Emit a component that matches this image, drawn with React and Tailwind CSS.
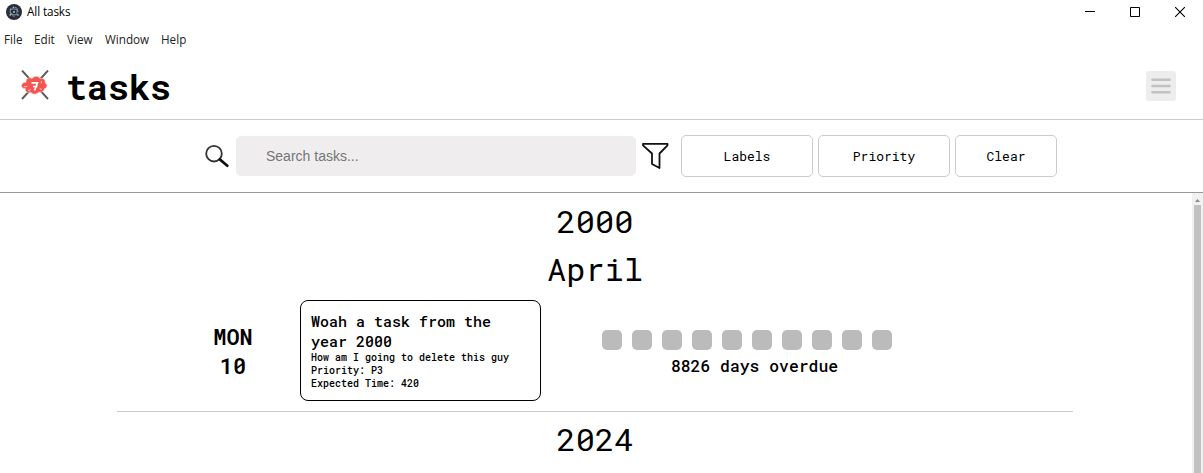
const MONO = "font-['Roboto_Mono','DejaVu_Sans_Mono','Liberation_Mono',monospace]";

function AppIcon() {
  return (
    <svg className="h-4 w-4" viewBox="0 0 16 16" fill="none">
      <circle cx="8" cy="8" r="8" fill="#2b2e3a" />
      <g stroke="#8fb0bb" strokeWidth="0.9">
        <path d="M5 4.200C3 6.500 5 11 8.500 12.700M4.300 6C6.500 4.200 11 4.600 12.300 7.800M11.700 10.200C9.500 11.600 5.500 10.600 3.700 8.400M9 3.600C11.500 3 12 6.500 10.500 9.500" />
      </g>
      <circle cx="8" cy="8" r="0.9" fill="#9fcfdc" />
      <circle cx="4.200" cy="10.900" r="0.8" fill="#9fcfdc" />
      <circle cx="12" cy="11" r="0.8" fill="#9fcfdc" />
      <circle cx="7.500" cy="3.400" r="0.8" fill="#9fcfdc" />
    </svg>
  );
}

function Logo() {
  return (
    <svg className="h-[30px] w-[28px] shrink-0" viewBox="0 0 28 30">
      <path d="M1 0.5L27 29M27 0.5L1 29" stroke="#5c5c5c" strokeWidth="1.9" />
      <path
        d="M0.5 15.500C1 13 3 12 5 12.500C4.500 8.500 8.500 6.500 11 8.500C13 5.500 18 6 19 8.500C22 7.500 25 10 24 13C27 14 26.500 18 23.500 18.500C23 21.500 20 23 18 22C15 25 11 24.500 9.500 22C6.500 23.500 3.500 21.500 4.500 18.500C2.500 18.500 0.500 18 0.500 15.500Z"
        fill="#f4554f" stroke="#f8c5c1" strokeWidth="0.7"
      />
      <path d="M3 16.500Q5 17.500 6.500 16M7 20.500Q9 21 9.500 19M20 11Q21.500 12 20 13.500M21 19.500Q19 19.500 19 18" stroke="#fbd5d2" strokeWidth="0.9" fill="none" />
      <path d="M10.500 12.800H16.500L13.500 20.500M12 16.500H16.500" stroke="#fff" strokeWidth="1.700" fill="none" />
    </svg>
  );
}

function WindowControls() {
  return (
    <div className="ml-auto mr-[18px] flex items-center gap-[35px]">
      <svg className="h-[11px] w-[10px]" viewBox="0 0 10 11"><path d="M0 5.500H10" stroke="#000" /></svg>
      <svg className="h-[10px] w-[10px]" viewBox="0 0 10 10"><path d="M.5.5H9.500V9.500H.5Z" fill="none" stroke="#000" /></svg>
      <svg className="h-[10px] w-[10px]" viewBox="0 0 10 10"><path d="M0 0L10 10M10 0L0 10" stroke="#000" strokeWidth="1.1" /></svg>
    </div>
  );
}

function FilterButton({ children, className }) {
  return (
    <button className={`${MONO} h-[42px] rounded-[5px] border border-[#ccc] bg-white pt-px text-[13px] text-black ${className}`}>
      {children}
    </button>
  );
}

export default function App() {
  return (
    <div className={`${MONO} flex h-[473px] w-[1203px] flex-col overflow-hidden bg-white text-black`}>
      <div className="flex h-[23px] shrink-0 items-center gap-[5px] pl-[6px] font-['Open_Sans',sans-serif] text-[11.7px]">
        <AppIcon />
        <span className="pt-px tracking-[-0.1px]">All tasks</span>
        <WindowControls />
      </div>
      <nav className="flex h-[30px] shrink-0 items-center pl-1 pt-[3px] font-['Open_Sans',sans-serif] text-[11.7px] text-[#222]">
        <span className="w-[30px]">File</span>
        <span className="w-[33px]">Edit</span>
        <span className="w-[38px]">View</span>
        <span className="w-[56px]">Window</span>
        <span>Help</span>
      </nav>
      <header className="flex h-[67px] shrink-0 items-center border-b border-[#ccc] pl-[21px] pr-[27px]">
        <div className="-mt-[2px]"><Logo /></div>
        <h1 className="ml-[17px] text-[35px] font-bold leading-[46px]">tasks</h1>
        <button className="ml-auto flex h-[30px] w-[30px] flex-col items-center justify-center rounded-[3px] bg-[#ededed]">
          <svg className="h-[20px] w-[20px]" viewBox="0 0 20 20">
            <path d="M1.500 3.700H18.500M1.500 10H18.500M1.500 16.300H18.500" stroke="#c1c1c1" strokeWidth="2.600" strokeLinecap="round" />
          </svg>
        </button>
      </header>
      <div className="flex h-[73px] shrink-0 items-center border-b border-[#999] pl-[205px]">
        <svg className="h-[24px] w-[24px] shrink-0" viewBox="0 0 24 24" fill="none">
          <circle cx="9" cy="9.700" r="7.800" stroke="#333" strokeWidth="1.800" />
          <path d="M14.800 15.400L22.300 21.700" stroke="#111" strokeWidth="2.700" strokeLinecap="round" />
        </svg>
        <div className="ml-[7px] flex h-10 w-[400px] items-center rounded-[5px] bg-[#efedee] pl-[30px] font-['Liberation_Sans',sans-serif] text-[14px] text-[#757575]">
          Search tasks...
        </div>
        <svg className="ml-[6px] h-[28px] w-[27px] shrink-0" viewBox="0 0 27 28" fill="none">
          <path d="M1 1.800H25.500V3.300L17.500 11.500V26L10 22V11.500L1 3.300Z" stroke="#111" strokeWidth="1.800" strokeLinejoin="round" />
        </svg>
        <div className="ml-[12px] flex gap-[5px]">
          <FilterButton className="w-[132px]">Labels</FilterButton>
          <FilterButton className="w-[132px]">Priority</FilterButton>
          <FilterButton className="w-[102px]">Clear</FilterButton>
        </div>
      </div>
      <main className="flex min-h-0 flex-1">
        <div className="w-[1192px] pl-[117px] pt-[4px]">
          <h2 className="w-[956px] text-center text-[32px] leading-[48px]">2000</h2>
          <h2 className="w-[956px] text-center text-[32px] leading-[48px]">April</h2>
          <div className="mt-[7px] flex h-[112px] w-[956px] items-start border-b border-[#ccc]">
            <div className="ml-[83px] mt-[22px] w-[66px] text-center text-[22px] font-semibold leading-[29px]">
              <div>MON</div>
              <div>10</div>
            </div>
            <article className="ml-[34px] h-[101px] w-[241px] rounded-[8px] border border-black px-[10px] pt-[10px] font-medium">
              <h3 className="text-[15px] leading-[20px]">Woah a task from the<br />year 2000</h3>
              <p className="text-[10px] leading-[13px]">How am I going to delete this guy</p>
              <p className="text-[10px] leading-[13px]">Priority: P3</p>
              <p className="text-[10px] leading-[13px]">Expected Time: 420</p>
            </article>
            <div className="ml-[61px] mt-[30px] flex w-[290px] flex-col items-center">
              <div className="flex gap-[10px]">
                {Array.from({ length: 10 }, (_, i) => (
                  <span key={i} className="h-5 w-5 rounded-[5px] bg-[#bbb]" />
                ))}
              </div>
              <p className="mt-[5px] pl-[15px] text-[16.400px] font-medium leading-[22px]">8826 days overdue</p>
            </div>
          </div>
          <h2 className="mt-[3px] w-[956px] text-center text-[32px] leading-[48px]">2024</h2>
        </div>
        <div className="flex w-[11px] flex-col items-center bg-[#f1f1f1]">
          <svg className="mt-[6px] h-[3px] w-[5px] shrink-0" viewBox="0 0 5 3"><path d="M0 3L2.500 0L5 3Z" fill="#888" /></svg>
          <span className="mt-[3px] w-[7px] flex-1 bg-[#c1c1c1]" />
        </div>
      </main>
    </div>
  );
}
